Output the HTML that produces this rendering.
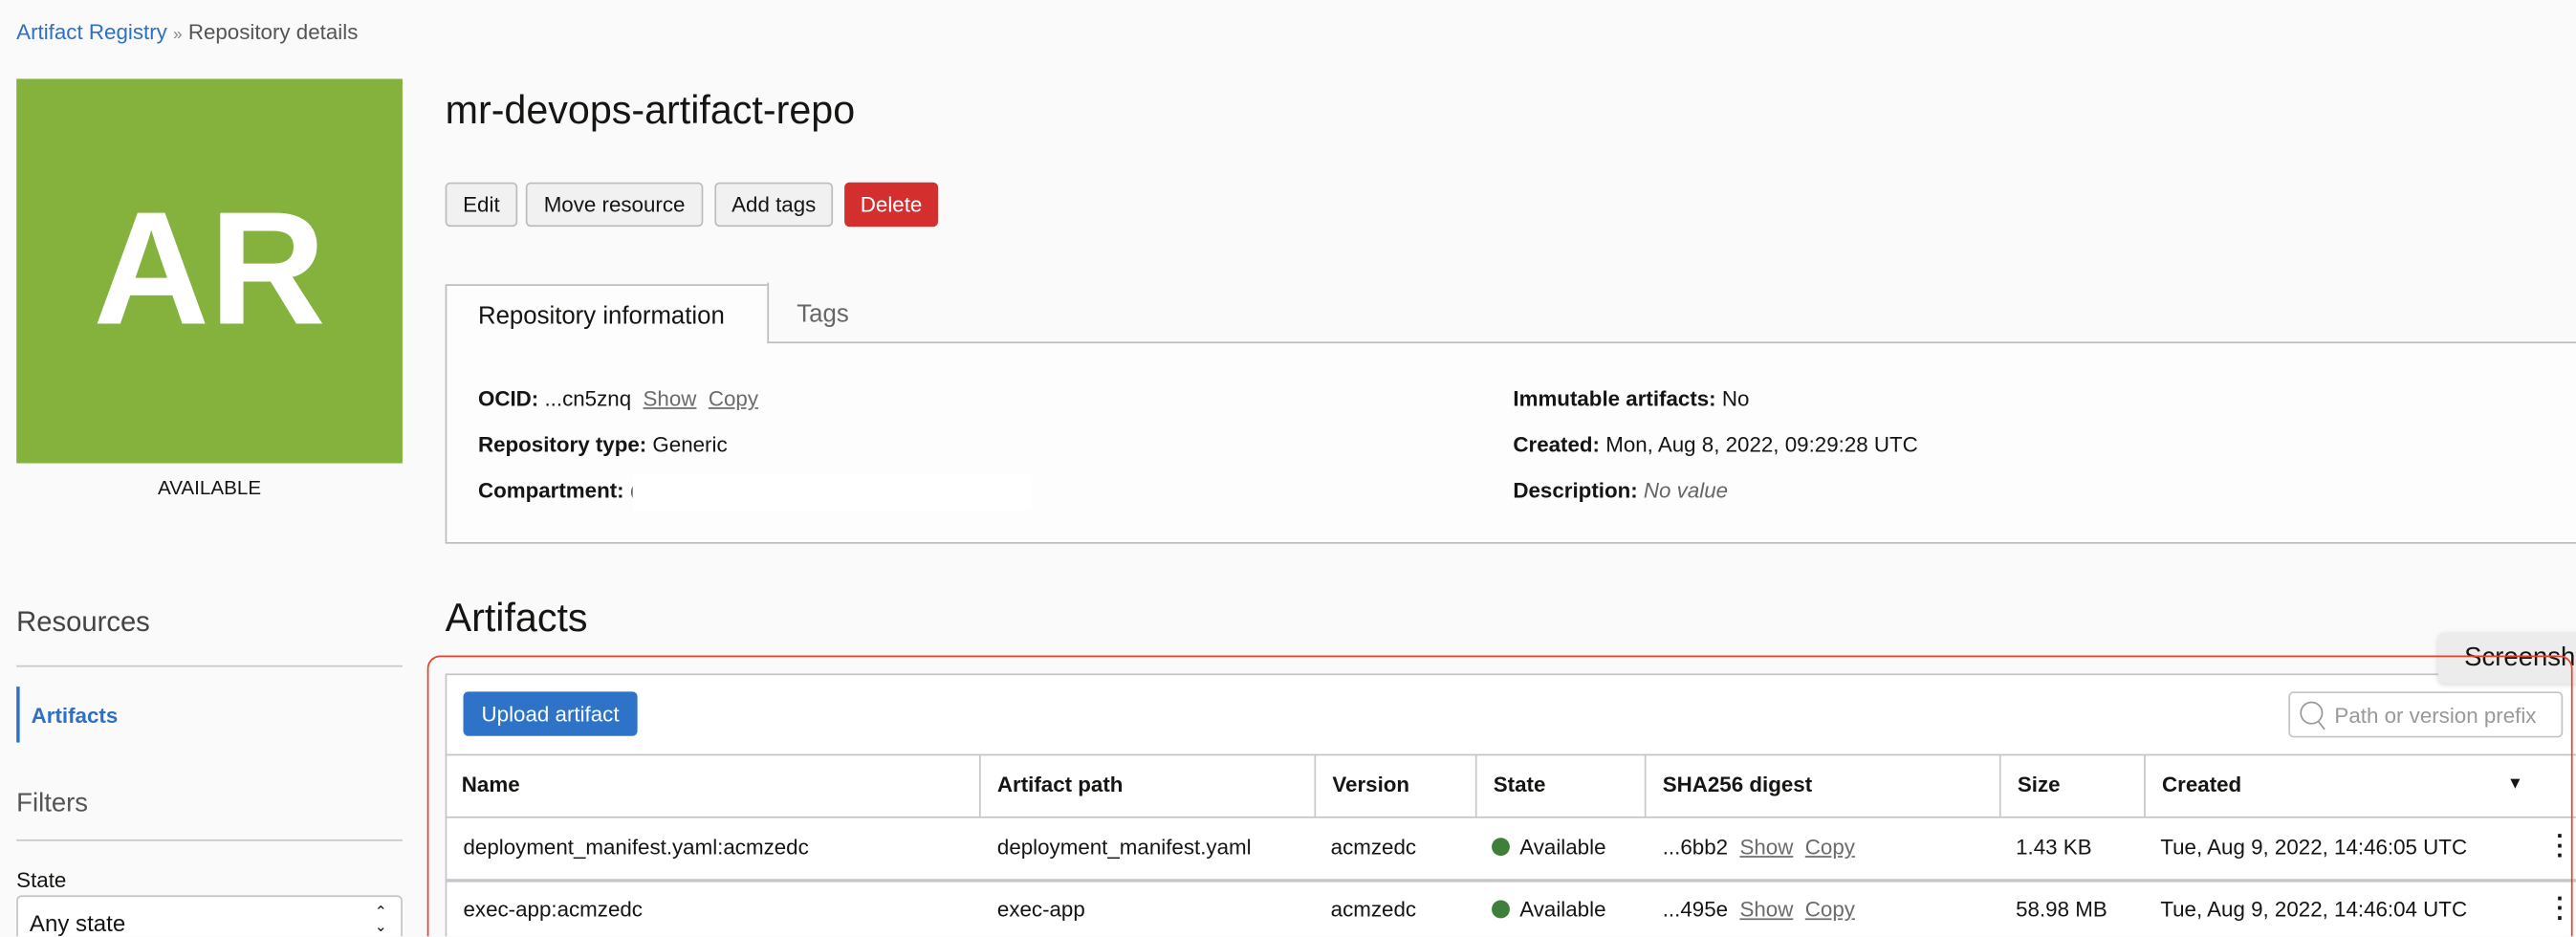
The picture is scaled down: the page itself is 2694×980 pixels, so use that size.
<!DOCTYPE html>
<html><head><meta charset="utf-8"><style>
html,body{margin:0;padding:0;background:#fafafa;overflow:hidden;width:2694px;height:980px}
#w{position:absolute;left:0;top:0;width:1568px;height:570px;overflow:hidden;transform:scale(1.71811);transform-origin:0 0;font-family:"Liberation Sans",sans-serif;color:#161513;font-size:13px}
.a{position:absolute;white-space:nowrap}
.btn{position:absolute;top:111px;height:27px;box-sizing:border-box;border:1px solid #bcbcbc;border-radius:3px;background:#f1f1f1;line-height:25px;text-align:center;font-size:13px}
u{color:#6b6b6b;text-decoration:underline}
.th{position:absolute;top:459px;height:38px;line-height:38px;font-weight:bold;border-left:1px solid #c8c8c8;padding-left:10px;box-sizing:border-box}
.td{position:absolute;line-height:38px;padding-left:10px}
.dot{display:inline-block;width:11px;height:11px;border-radius:50%;background:#3e7f3a;vertical-align:-1px;margin-right:6px}
</style></head><body><div id="w">
<div class="a" style="left:10px;top:12px"><span style="color:#2f6fc4">Artifact Registry</span> <span style="color:#888;font-size:10px">»</span> <span style="color:#555">Repository details</span></div>
<div class="a" style="left:10px;top:48px;width:235px;height:234px;background:#85b13d;color:#fff;font-weight:bold;font-size:98px;text-align:center;line-height:230px">AR</div>
<div class="a" style="left:10px;top:290px;width:235px;text-align:center;font-size:12px">AVAILABLE</div>
<div class="a" style="left:271px;top:54px;font-size:24px">mr-devops-artifact-repo</div>
<div class="btn" style="left:271px;width:44px">Edit</div>
<div class="btn" style="left:320px;width:108px">Move resource</div>
<div class="btn" style="left:435px;width:72px">Add tags</div>
<div class="btn" style="left:514px;width:57px;background:#d42f2f;border-color:#d42f2f;color:#fff">Delete</div>
<div class="a" style="left:271px;top:173px;width:1400px;height:158px;border:1px solid #bdbdbd;box-sizing:border-box;background:#fdfdfd"></div>
<div class="a" style="left:467px;top:172px;width:1200px;height:36px;border-bottom:1px solid #bdbdbd;border-left:1px solid #bdbdbd;background:#fafafa"></div>
<div class="a" style="left:291px;top:184px;font-size:15px">Repository information</div>
<div class="a" style="left:485px;top:183px;font-size:15px;color:#666">Tags</div>
<div class="a" style="left:291px;top:235px"><b>OCID:</b> ...cn5znq &nbsp;<u>Show</u> &nbsp;<u>Copy</u></div>
<div class="a" style="left:291px;top:263px"><b>Repository type:</b> Generic</div>
<div class="a" style="left:291px;top:291px"><b>Compartment:</b> (</div>
<div class="a" style="left:385px;top:289px;width:243px;height:22px;background:#fff"></div>
<div class="a" style="left:921px;top:235px"><b>Immutable artifacts:</b> No</div>
<div class="a" style="left:921px;top:263px"><b>Created:</b> Mon, Aug 8, 2022, 09:29:28 UTC</div>
<div class="a" style="left:921px;top:291px"><b>Description:</b> <i style="color:#666">No value</i></div>
<div class="a" style="left:10px;top:369px;font-size:17px;color:#444">Resources</div>
<div class="a" style="left:10px;top:405px;width:235px;height:1px;background:#c8c8c8"></div>
<div class="a" style="left:10px;top:418px;width:2px;height:34px;background:#2f6fc4"></div>
<div class="a" style="left:19px;top:428px;color:#2f6fc4;font-weight:bold">Artifacts</div>
<div class="a" style="left:10px;top:481px;font-size:16px;color:#555">Filters</div>
<div class="a" style="left:10px;top:511px;width:235px;height:1px;background:#c8c8c8"></div>
<div class="a" style="left:10px;top:528px">State</div>
<div class="a" style="left:10px;top:545px;width:235px;height:40px;border:1px solid #c4c4c4;border-radius:3px;box-sizing:border-box;background:#fff"></div>
<div class="a" style="left:18px;top:554px;font-size:14px">Any state</div>
<div class="a" style="left:228px;top:551px;font-size:9px;line-height:9px">⌃<br>⌄</div>
<div class="a" style="left:271px;top:363px;font-size:24px">Artifacts</div>
<div class="a" style="left:271px;top:410px;width:1300px;height:170px;border:1px solid #c4c4c4;background:#fff"></div>
<div class="a" style="left:282px;top:421px;width:106px;height:27px;background:#2f73c9;border-radius:3px;color:#fff;text-align:center;line-height:27px">Upload artifact</div>
<div class="a" style="left:1393px;top:421px;width:167px;height:28px;border:1px solid #c4c4c4;border-radius:3px;box-sizing:border-box;background:#fff"></div>
<svg class="a" style="left:1398px;top:426px" width="20" height="20" viewBox="0 0 20 20"><circle cx="9" cy="8" r="6.5" fill="none" stroke="#999" stroke-width="1"/><path d="M13 13l4 5" stroke="#999"/></svg>
<div class="a" style="left:1421px;top:428px;color:#999">Path or version prefix</div>
<div class="a" style="left:271px;top:459px;width:1300px;height:1px;background:#c4c4c4"></div>
<div class="a" style="left:271px;top:497px;width:1300px;height:1px;background:#c4c4c4"></div>
<div class="a" style="left:271px;top:535px;width:1300px;height:2px;background:#c4c7cc"></div>
<div class="th" style="left:271px;border-left:0">Name</div>
<div class="th" style="left:596px">Artifact path</div>
<div class="th" style="left:800px">Version</div>
<div class="th" style="left:898px">State</div>
<div class="th" style="left:1001px">SHA256 digest</div>
<div class="th" style="left:1217px">Size</div>
<div class="th" style="left:1305px">Created</div>
<div class="a" style="left:1526px;top:472px;font-size:10px">▼</div>
<div class="td" style="left:272px;top:497px">deployment_manifest.yaml:acmzedc</div>
<div class="td" style="left:597px;top:497px">deployment_manifest.yaml</div>
<div class="td" style="left:800px;top:497px">acmzedc</div>
<div class="td" style="left:898px;top:497px"><span class="dot"></span>Available</div>
<div class="td" style="left:1002px;top:497px">...6bb2 &nbsp;<u>Show</u> &nbsp;<u>Copy</u></div>
<div class="td" style="left:1217px;top:497px">1.43 KB</div>
<div class="td" style="left:1305px;top:497px">Tue, Aug 9, 2022, 14:46:05 UTC</div>
<div class="td" style="left:272px;top:535px">exec-app:acmzedc</div>
<div class="td" style="left:597px;top:535px">exec-app</div>
<div class="td" style="left:800px;top:535px">acmzedc</div>
<div class="td" style="left:898px;top:535px"><span class="dot"></span>Available</div>
<div class="td" style="left:1002px;top:535px">...495e &nbsp;<u>Show</u> &nbsp;<u>Copy</u></div>
<div class="td" style="left:1217px;top:535px">58.98 MB</div>
<div class="td" style="left:1305px;top:535px">Tue, Aug 9, 2022, 14:46:04 UTC</div>
<div class="a" style="left:1556px;top:507px;font-weight:bold;font-size:15px;line-height:6px">·<br>·<br>·</div>
<div class="a" style="left:1556px;top:545px;font-weight:bold;font-size:15px;line-height:6px">·<br>·<br>·</div>
<div class="a" style="left:1484px;top:385px;width:100px;height:31px;background:#ececec;border-radius:4px;box-shadow:0 1px 3px rgba(0,0,0,.15)"></div>
<div class="a" style="left:1500px;top:392px;font-size:16px">Screensh</div>
<div class="a" style="left:260px;top:399px;width:1306px;height:200px;border:1.5px solid #e8412c;border-radius:8px;box-sizing:border-box"></div>
</div></body></html>
